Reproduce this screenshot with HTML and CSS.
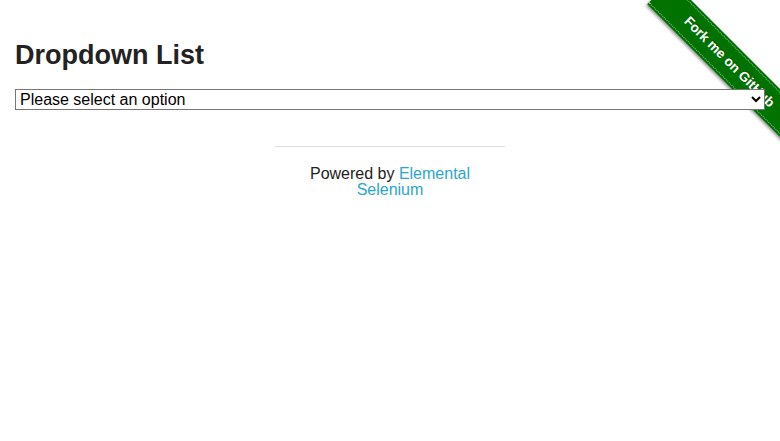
FILE: index.html
```html
<!DOCTYPE html>
<html lang="en">
<head>
<meta charset="utf-8">
<title>The Internet</title>
<link rel="stylesheet" href="styles.css">
</head>
<body>
<a class="ribbon-wrap" href="#"><span class="ribbon">Fork me on GitHub</span></a>
<div class="page">
  <div class="content">
    <h3 class="title">Dropdown List</h3>
    <select class="dropdown">
      <option selected>Please select an option</option>
      <option>Option 1</option>
      <option>Option 2</option>
    </select>
  </div>
  <footer class="footer">
    <hr class="rule">
    <div class="powered">Powered by <a class="link" href="#">Elemental Selenium</a></div>
  </footer>
</div>
</body>
</html>
```
FILE: styles.css
```css
html, body {
  margin: 0;
  padding: 0;
  background: #fff;
}
body {
  font-family: "Liberation Sans", Arial, sans-serif;
  color: #222;
  font-size: 16px;
}
.page {
  display: flex;
  flex-direction: column;
}
.content {
  padding: 39px 15px 0;
}
.title {
  margin: 0 0 18px;
  font-size: 27px;
  line-height: 32px;
  font-weight: bold;
  color: #222;
}
.dropdown {
  position: relative;
  z-index: 2;
  display: block;
  width: 100%;
  font-family: "Liberation Sans", Arial, sans-serif;
  font-size: 16px;
  color: #000;
  background-color: #fff;
  margin: 0;
}
.footer {
  width: 230px;
  margin: 36px auto 0;
  text-align: center;
}
.rule {
  margin: 0 0 19px;
  border: 0;
  border-top: 1px solid #ddd;
  height: 0;
}
.powered {
  line-height: 16px;
  font-size: 16px;
}
.link {
  color: #2ba6cb;
  text-decoration: none;
}
.ribbon-wrap {
  position: absolute;
  z-index: 1;
  top: 0;
  right: 0;
  width: 149px;
  height: 149px;
  overflow: hidden;
  text-decoration: none;
}
.ribbon {
  position: absolute;
  left: -4px;
  top: 53px;
  width: 220px;
  height: 34px;
  padding-right: 22px;
  box-sizing: border-box;
  background: #007200;
  transform: rotate(45deg);
  box-shadow: 0 2px 3px rgba(0, 0, 0, 0.4);
  color: #fff;
  font-family: "Liberation Sans", Arial, sans-serif;
  font-weight: bold;
  font-size: 13.5px;
  line-height: 34px;
  text-align: center;
  text-shadow: 0 -1px 0 rgba(0, 0, 0, 0.4);
}
.ribbon::before,
.ribbon::after {
  content: "";
  position: absolute;
  left: 0;
  right: 0;
  border-top: 1px dotted rgba(255, 255, 255, 0.55);
}
.ribbon::before { top: 2px; }
.ribbon::after { bottom: 2px; }
```
